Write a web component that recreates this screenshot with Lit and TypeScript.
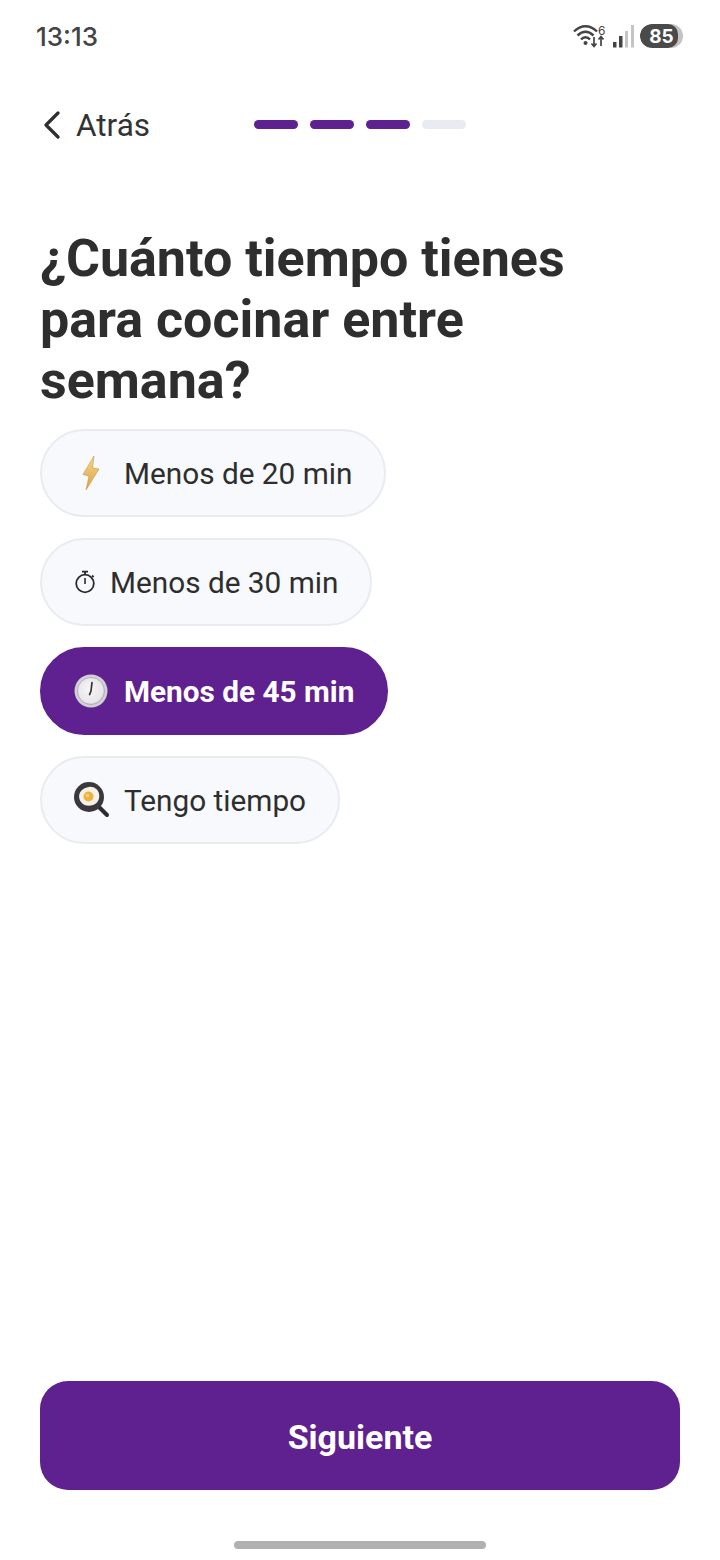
import { LitElement, html, css } from "lit";
import { customElement } from "lit/decorators.js";

const bolt = html`<svg class="ico" width="24" height="36" viewBox="0 0 24 36"><defs><linearGradient id="b" x1="0" y1="0" x2="0" y2="1"><stop offset="0" stop-color="#f5d98a"/><stop offset="1" stop-color="#dda044"/></linearGradient></defs><path d="M14 1 L3 19.500 L9 21 L6 35 L19 14 L12.500 13 Z" fill="url(#b)" stroke="#c9924a" stroke-width=".6"/></svg>`;
const timer = html`<svg class="ico" width="22" height="24" viewBox="0 0 22 24" fill="none" stroke="#2b2b2b"><circle cx="11" cy="13.500" r="8.800" stroke-width="1.800"/><path d="M8 1.600h6M11 2v3M18 5.500l1.600 1.600" stroke-width="1.800"/><path d="M11 8v6" stroke-width="1.600"/></svg>`;
const clock = html`<svg class="ico" width="34" height="34" viewBox="0 0 34 34"><defs><radialGradient id="c" cx=".45" cy=".45" r=".6"><stop offset="0" stop-color="#f7f5f7"/><stop offset=".8" stop-color="#e9e6eb"/><stop offset="1" stop-color="#c2bcc6"/></radialGradient></defs><circle cx="17" cy="17" r="16.500" fill="#d3cfd6"/><circle cx="17" cy="17" r="13.500" fill="url(#c)" stroke="#a9a2ae" stroke-width=".8"/><path d="M18 8.500 L17 17 M17 17 L15.600 20.500" stroke="#333" stroke-width="1.700" stroke-linecap="round" fill="none"/></svg>`;
const pan = html`<svg class="ico" width="36" height="36" viewBox="0 0 36 36"><path d="M25 25l8 8" stroke="#2b2b30" stroke-width="4" stroke-linecap="round"/><circle cx="15" cy="15" r="15" fill="#3a383c"/><path d="M15 5c4-1 9 2 10 6.500 1 5-1 10-6 11.500-4 1.500-9 1-12-3-2.500-3.500-2.500-8 0-11 2-2.500 5-3.500 8-4z" fill="#f6f1e8"/><circle cx="14.500" cy="14.500" r="5" fill="#eeb13c"/><circle cx="13.500" cy="13.500" r="1.800" fill="#f7d27a"/></svg>`;

const options = [
  { icon: bolt, label: "Menos de 20 min", cls: "w-bolt", sel: false },
  { icon: timer, label: "Menos de 30 min", cls: "w-timer", sel: false },
  { icon: clock, label: "Menos de 45 min", cls: "w-clock", sel: true },
  { icon: pan, label: "Tengo tiempo", cls: "w-pan", sel: false },
];

@customElement("app-root")
export class AppRoot extends LitElement {
  static styles = css`
    :host { display: block; width: 720px; height: 1560px; background: #fff; font-family: Roboto, "Noto Sans", sans-serif; color: #2e2e2e; }
    .page { height: 1560px; display: flex; flex-direction: column; box-sizing: border-box; overflow: hidden; }
    .status { height: 72px; flex: none; display: flex; align-items: center; justify-content: space-between; padding: 0 37px 0 36px; }
    .time { font-family: Inter, Roboto, sans-serif; font-size: 26px; font-weight: 500; color: #444; }
    .sys { display: flex; align-items: center; gap: 6px; }
    .batt { position: relative; width: 43px; height: 24px; border-radius: 12px; background: #c4c4c4; overflow: hidden; display: flex; align-items: center; justify-content: center; }
    .batt::before { content: ""; position: absolute; inset: 0 5px 0 0; background: #4a4a4a; border-radius: 12px 10px 10px 12px; }
    .batt span { position: relative; color: #fff; font-size: 19px; font-weight: 700; font-family: Inter, Roboto, sans-serif; }
    .nav { height: 50px; margin-top: 28px; flex: none; display: flex; align-items: center; padding-left: 43px; }
    .back { display: flex; align-items: center; gap: 15px; font-size: 31.500px; color: #333; width: 211px; flex: none; }
    .steps { display: flex; gap: 12px; margin-top: -2px; }
    .step { width: 44px; height: 9px; border-radius: 5px; background: #5f2090; }
    .step.off { background: #e9ebf2; }
    h1 { margin: 78px 0 0; padding: 0 40px; font-size: 52px; line-height: 61px; font-weight: 700; color: #2e2e2e; width: 580px; }
    .opts { display: flex; flex-direction: column; align-items: flex-start; gap: 21px; padding: 0 40px; margin-top: 18px; }
    .opt { box-sizing: border-box; height: 88px; border-radius: 44px; border: 2px solid #e8ecf1; background: #f7f9fc; display: flex; align-items: center; padding: 0 32px; font-size: 29.750px; color: #2e2e2e; }
    .opt.sel { background: #5f2090; border-color: #5f2090; color: #fff; font-weight: 700; }
    .iw { display: flex; align-items: center; flex: none; width: 50px; box-sizing: border-box; }
    .w-bolt .iw { padding-left: 6px; }
    .w-timer .iw { width: 36px; }
    .ico { display: block; }
    .spacer { flex: 1; }
    .cta { margin: 0 40px; height: 109px; flex: none; border-radius: 28px; background: #5f2090; color: #fff; font-size: 34px; font-weight: 700; display: flex; align-items: center; justify-content: center; padding-top: 2px; box-sizing: border-box; }
    .home { flex: none; height: 70px; display: flex; justify-content: center; align-items: flex-start; padding-top: 51px; box-sizing: border-box; }
    .home i { display: block; width: 252px; height: 8px; border-radius: 4px; background: #b0b0b0; }
  `;

  render() {
    return html`<div class="page">
      <div class="status">
        <span class="time">13:13</span>
        <div class="sys">
          <svg width="34" height="24" viewBox="0 0 34 24" fill="none" stroke="#444">
            <path d="M1 7.500C8 .5 17 .5 24 7.500M4.500 11.500C10 6.500 15 6.500 20.500 11.500M8 15.500C10.500 12.500 14.500 12.500 17 15.500" stroke-width="2.400"/>
            <circle cx="12.500" cy="19" r="2" fill="#444" stroke="none"/>
            <text x="25" y="11" font-size="12" font-family="Inter, sans-serif" fill="#444" stroke="none">6</text>
            <path d="M21 13v9M18.500 19.500l2.500 3 2.500-3M28 22v-9M25.500 15.500l2.500-3 2.500 3" stroke-width="1.700"/>
          </svg>
          <svg width="21" height="23" viewBox="0 0 21 23">
            <rect x="0" y="17" width="3.500" height="5.500" fill="#444"/>
            <rect x="6" y="11" width="3.500" height="11.500" fill="#444"/>
            <rect x="12" y="6" width="3" height="16.500" fill="#c4c4c4"/>
            <rect x="18" y="0" width="3" height="22.500" fill="#c4c4c4"/>
          </svg>
          <div class="batt"><span>85</span></div>
        </div>
      </div>
      <div class="nav">
        <div class="back">
          <svg width="18" height="28" viewBox="0 0 18 28" fill="none" stroke="#2e2e2e" stroke-width="3.200" stroke-linecap="round" stroke-linejoin="round"><path d="M15 2 L3 14 L15 26"/></svg>
          <span>Atrás</span>
        </div>
        <div class="steps">
          <div class="step"></div><div class="step"></div><div class="step"></div><div class="step off"></div>
        </div>
      </div>
      <h1>¿Cuánto tiempo tienes para cocinar entre semana?</h1>
      <div class="opts">
        ${options.map(o => html`<div class="opt ${o.cls} ${o.sel ? "sel" : ""}"><span class="iw">${o.icon}</span><span>${o.label}</span></div>`)}
      </div>
      <div class="spacer"></div>
      <div class="cta">Siguiente</div>
      <div class="home"><i></i></div>
    </div>`;
  }
}
